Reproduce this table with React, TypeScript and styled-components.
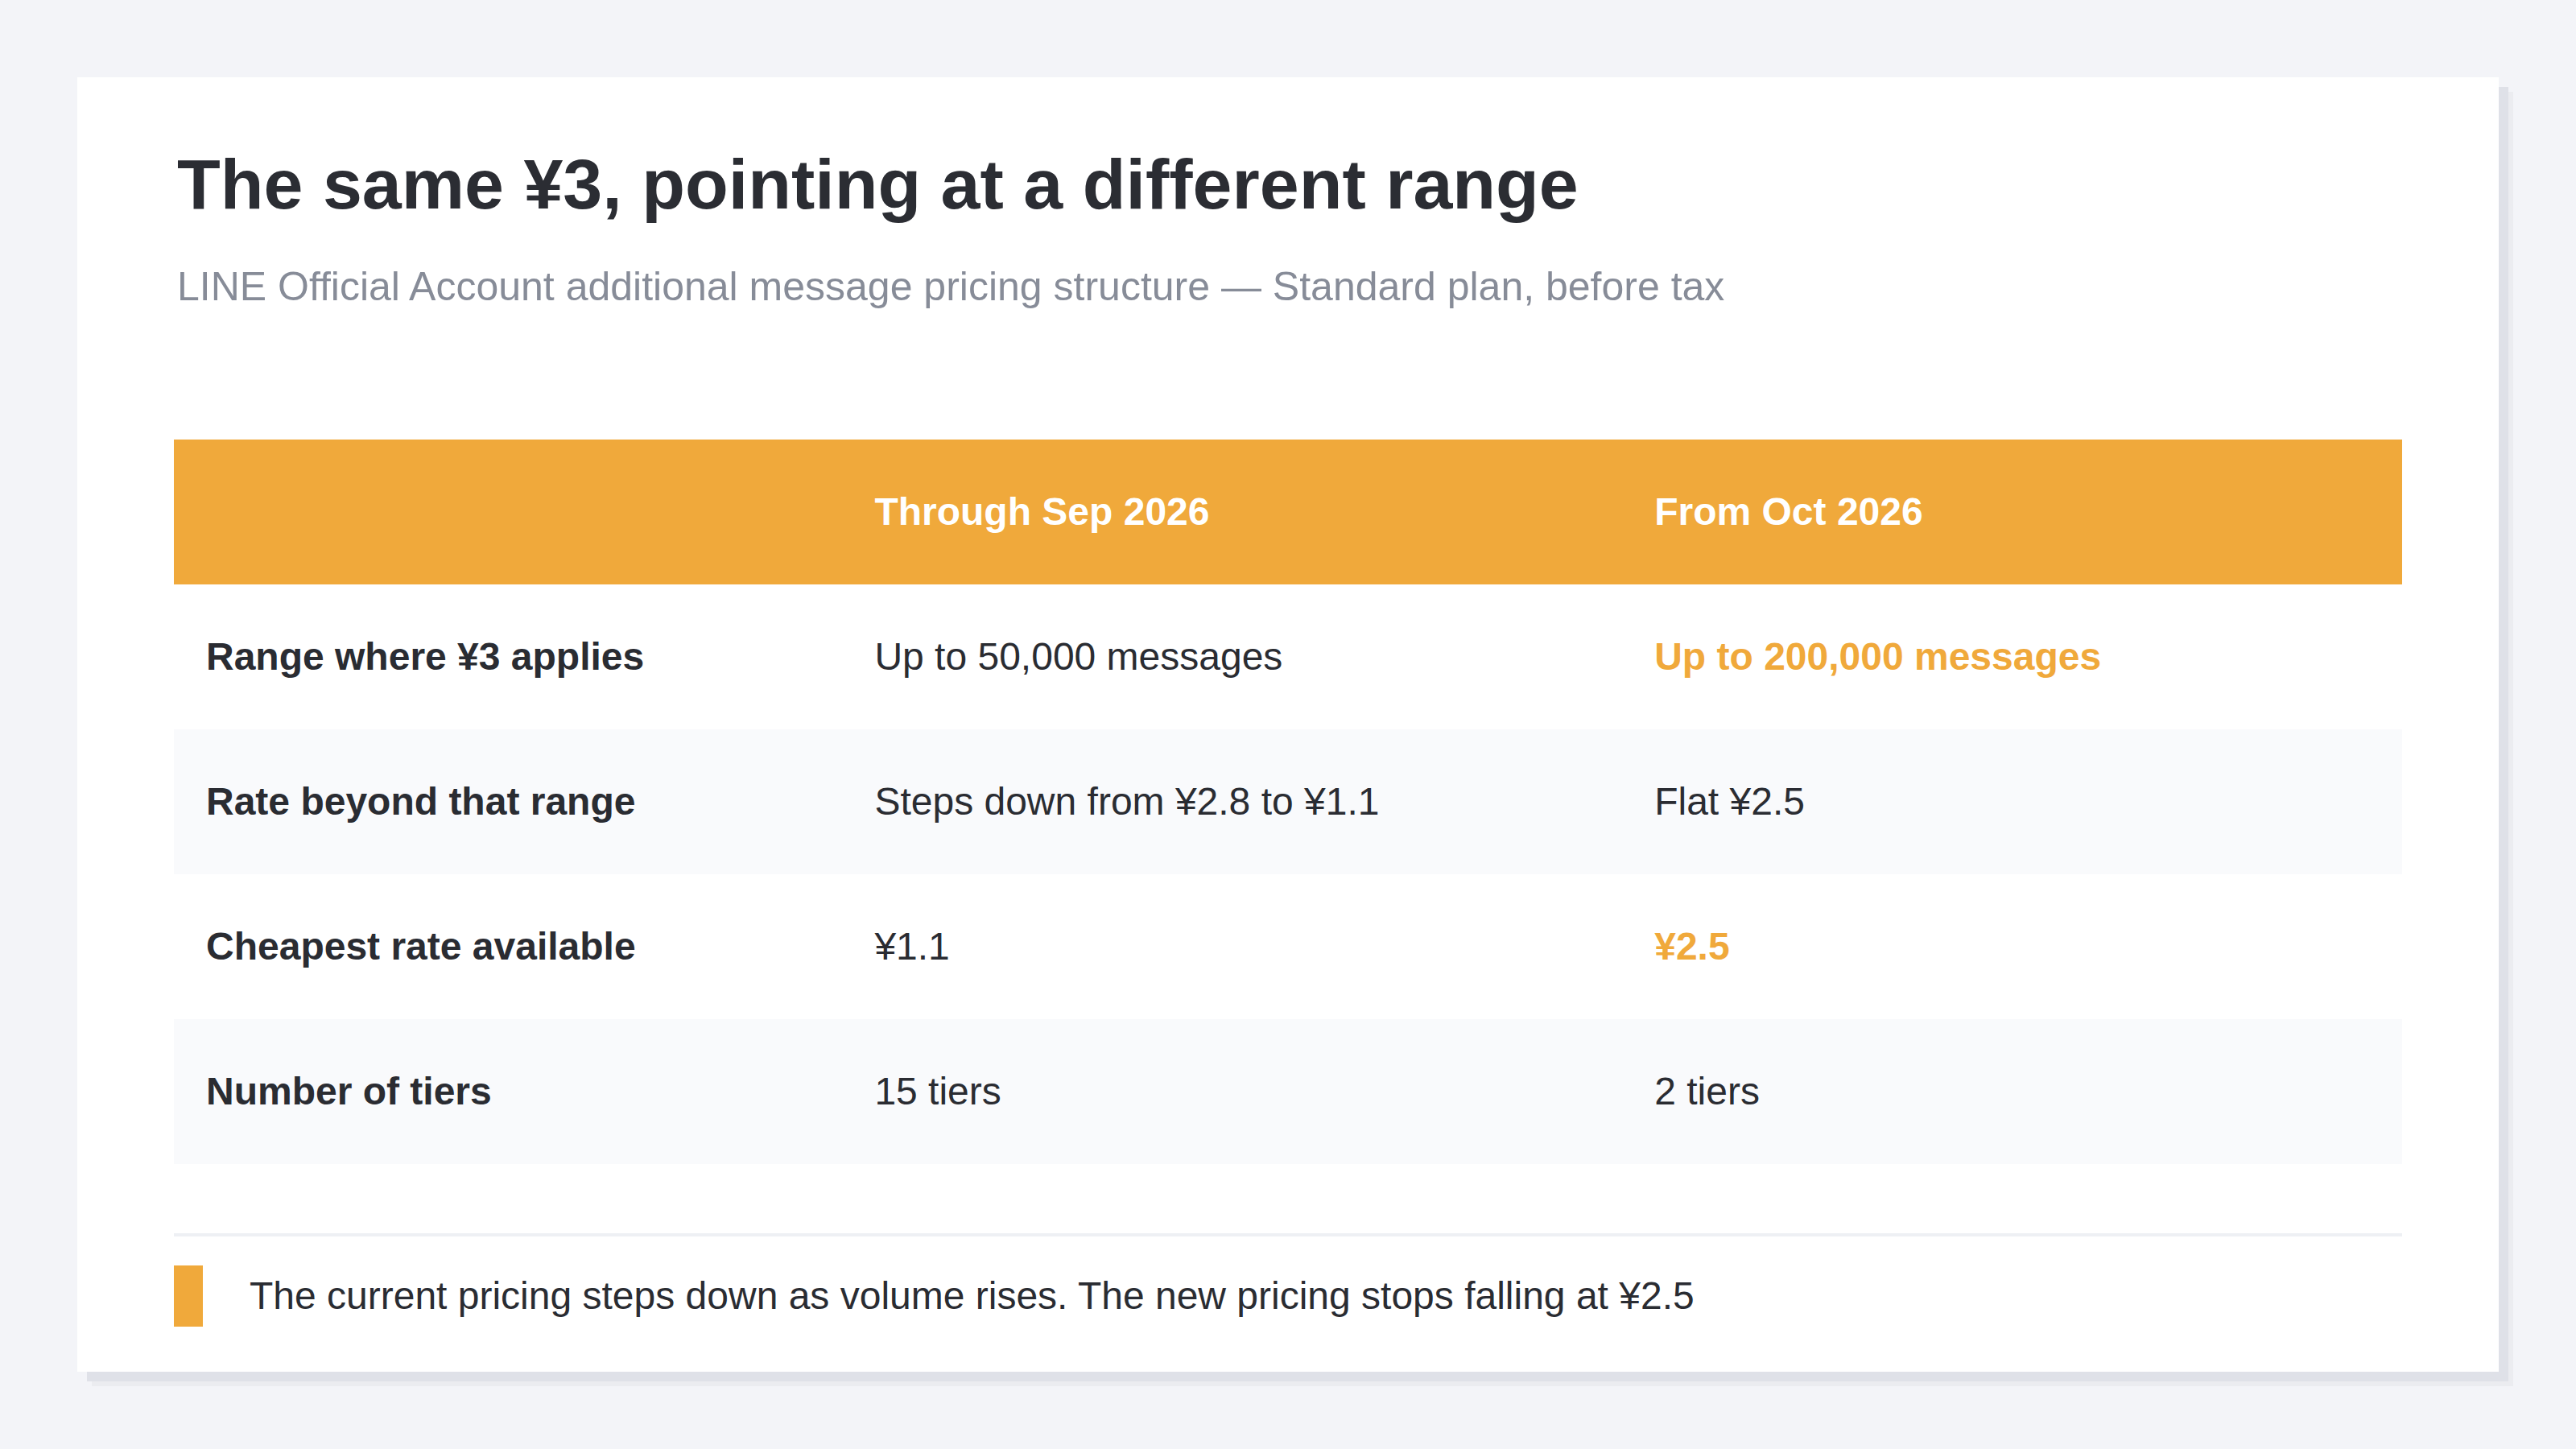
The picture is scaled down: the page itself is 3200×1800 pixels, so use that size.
import React from "react";
import styled, { createGlobalStyle } from "styled-components";

type Row = {
  label: string;
  current: string;
  next: string;
  highlight?: boolean;
};

const rows: Row[] = [
  { label: "Range where ¥3 applies", current: "Up to 50,000 messages", next: "Up to 200,000 messages", highlight: true },
  { label: "Rate beyond that range", current: "Steps down from ¥2.8 to ¥1.1", next: "Flat ¥2.5" },
  { label: "Cheapest rate available", current: "¥1.1", next: "¥2.5", highlight: true },
  { label: "Number of tiers", current: "15 tiers", next: "2 tiers" },
];

const App = () => {
  return (
    <>
      <GlobalStyle />
      <Page>
        <Card>
          <Title>The same ¥3, pointing at a different range</Title>
          <Subtitle>
            LINE Official Account additional message pricing structure — Standard plan, before tax
          </Subtitle>
          <Table>
            <colgroup>
              <col style={{ width: "30%" }} />
              <col style={{ width: "35%" }} />
              <col style={{ width: "35%" }} />
            </colgroup>
            <thead>
              <tr>
                <HeadCell />
                <HeadCell>Through Sep 2026</HeadCell>
                <HeadCell>From Oct 2026</HeadCell>
              </tr>
            </thead>
            <tbody>
              {rows.map((row, i) => (
                <BodyRow key={row.label} $striped={i % 2 === 1}>
                  <LabelCell>{row.label}</LabelCell>
                  <Cell>{row.current}</Cell>
                  <Cell $accent={row.highlight}>{row.next}</Cell>
                </BodyRow>
              ))}
            </tbody>
          </Table>
          <Footnote>
            <Marker />
            <NoteText>
              The current pricing steps down as volume rises. The new pricing stops falling at ¥2.5
            </NoteText>
          </Footnote>
        </Card>
      </Page>
    </>
  );
};

const GlobalStyle = createGlobalStyle`
  html, body {
    margin: 0;
    padding: 0;
    background: #f3f4f8;
  }
  body {
    font-family: "Liberation Sans", Arial, sans-serif;
    color: #2a2c32;
  }
`;

const Page = styled.div`
  width: 3200px;
  height: 1800px;
  padding: 96px;
  box-sizing: border-box;
  background: #f3f4f8;
`;

const Card = styled.div`
  width: 3008px;
  height: 1608px;
  box-sizing: border-box;
  background: #ffffff;
  padding: 80px 120px 56px;
  box-shadow: 12px 12px 0 #dfe1e8, 18px 18px 0 #ebecf0;
  display: flex;
  flex-direction: column;
`;

const Title = styled.h1`
  margin: 0;
  font-size: 88px;
  line-height: 1.2;
  font-weight: 700;
  color: #2b2d33;
  padding-left: 4px;
`;

const Subtitle = styled.p`
  margin: 39px 0 0;
  font-size: 50px;
  line-height: 1.4;
  color: #878c98;
  padding-left: 4px;
`;

const Table = styled.table`
  margin-top: 155px;
  width: 100%;
  table-layout: fixed;
  border-collapse: collapse;
  font-size: 48px;
`;

const HeadCell = styled.th`
  height: 180px;
  padding: 0 40px;
  background: #f0a93b;
  color: #ffffff;
  font-weight: 700;
  text-align: left;
`;

const BodyRow = styled.tr<{ $striped?: boolean }>`
  background: ${(p) => (p.$striped ? "#f9fafc" : "#ffffff")};
`;

const Cell = styled.td<{ $accent?: boolean }>`
  height: 180px;
  padding: 0 40px;
  color: ${(p) => (p.$accent ? "#f0a93b" : "#2a2c32")};
  font-weight: ${(p) => (p.$accent ? 700 : 400)};
`;

const LabelCell = styled(Cell)`
  font-weight: 700;
`;

const Footnote = styled.div`
  margin-top: 86px;
  border-top: 4px solid #eef0f4;
  padding-top: 36px;
  display: flex;
  align-items: center;
  gap: 58px;
`;

const Marker = styled.span`
  width: 36px;
  height: 76px;
  background: #f0a93b;
  flex-shrink: 0;
`;

const NoteText = styled.span`
  font-size: 48px;
  color: #2a2c32;
`;

export default App;
